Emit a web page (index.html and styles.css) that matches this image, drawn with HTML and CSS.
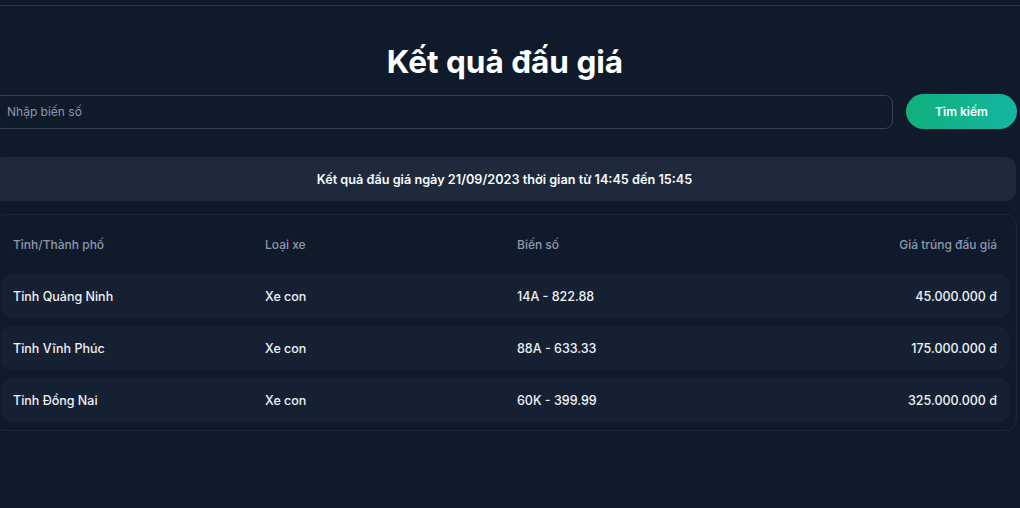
FILE: index.html
```html
<!DOCTYPE html>
<html lang="vi">
<head>
<meta charset="utf-8">
<title>Kết quả đấu giá</title>
<link rel="stylesheet" href="styles.css">
</head>
<body>
<div class="topbar"></div>
<main class="container">
  <h1 class="title">Kết quả đấu giá</h1>
  <form class="search">
    <input class="search-input" type="text" placeholder="Nhập biến số">
    <button class="search-btn" type="button">Tìm kiếm</button>
  </form>
  <div class="info">Kết quả đấu giá ngày 21/09/2023 thời gian từ 14:45 đến 15:45</div>
  <div class="card">
    <div class="row head">
      <div class="cell">Tỉnh/Thành phố</div>
      <div class="cell">Loại xe</div>
      <div class="cell">Biến số</div>
      <div class="cell right">Giá trúng đấu giá</div>
    </div>
    <div class="row item">
      <div class="cell">Tỉnh Quảng Ninh</div>
      <div class="cell">Xe con</div>
      <div class="cell">14A - 822.88</div>
      <div class="cell right">45.000.000 đ</div>
    </div>
    <div class="row item">
      <div class="cell">Tỉnh Vĩnh Phúc</div>
      <div class="cell">Xe con</div>
      <div class="cell">88A - 633.33</div>
      <div class="cell right">175.000.000 đ</div>
    </div>
    <div class="row item">
      <div class="cell">Tỉnh Đồng Nai</div>
      <div class="cell">Xe con</div>
      <div class="cell">60K - 399.99</div>
      <div class="cell right">325.000.000 đ</div>
    </div>
  </div>
</main>
</body>
</html>
```

FILE: styles.css
```css
* { box-sizing: border-box; }
html, body {
  margin: 0;
  padding: 0;
  background: #0f1a2b;
  overflow: hidden;
}
body {
  font-family: Inter, "Noto Sans", "Liberation Sans", sans-serif;
  color: #e2e8f0;
  height: 508px;
}
.topbar {
  height: 6px;
  border-bottom: 1px solid #2b3546;
}
.container {
  width: 1024px;
  margin-left: -7px;
  padding-top: 38px;
  display: flex;
  flex-direction: column;
}
.title {
  margin: 0;
  text-align: center;
  font-size: 31.5px;
  font-weight: 700;
  color: #ffffff;
  line-height: 36px;
}
.search {
  margin: 14px 0 0;
  display: flex;
  align-items: center;
  gap: 13px;
}
.search-input {
  flex: 1;
  height: 34px;
  background: #0f1a2b;
  border: 1px solid #334155;
  border-radius: 8px;
  padding: 0 13px;
  font-family: inherit;
  font-size: 12px;
  color: #e2e8f0;
  outline: none;
}
.search-input::placeholder { color: #8d99ab; }
.search-btn {
  width: 111px;
  height: 35px;
  border: none;
  border-radius: 18px;
  background: linear-gradient(90deg, #10b07c 0%, #14b5a2 100%);
  color: #ffffff;
  font-family: inherit;
  font-size: 12px;
  font-weight: 600;
}
.info {
  margin-top: 28px;
  margin-right: 1px;
  height: 44px;
  display: flex;
  align-items: center;
  justify-content: center;
  background: #1e293b;
  border-radius: 10px;
  font-size: 12.7px;
  font-weight: 600;
  color: #f8fafc;
}
.card {
  margin-top: 13px;
  border: 1px solid #1e293b;
  border-radius: 12px;
  padding: 8px 7px 8px 7px;
  display: flex;
  flex-direction: column;
  gap: 8px;
}
.row {
  display: grid;
  grid-template-columns: repeat(4, 1fr);
  align-items: center;
}
.row.head {
  height: 43px;
  font-size: 12px;
  font-weight: 500;
  color: #8d99ab;
}
.row.item {
  height: 44px;
  background: #162033;
  border-radius: 10px;
  font-size: 12.5px;
  font-weight: 500;
  color: #eef1f5;
}
.cell { padding: 0 12px; white-space: nowrap; }
.cell.right { text-align: right; }
```
